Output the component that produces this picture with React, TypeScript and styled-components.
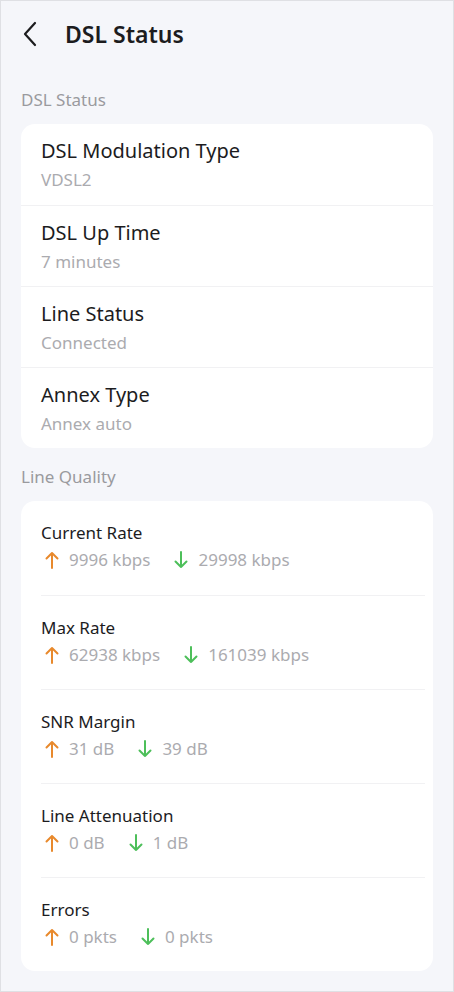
import styled, { createGlobalStyle } from "styled-components";

const GlobalStyle = createGlobalStyle`
  html, body {
    margin: 0;
    padding: 0;
    background: #f5f6fa;
  }
  * {
    box-sizing: border-box;
  }
`;

const statusRows = [
  { label: "DSL Modulation Type", value: "VDSL2" },
  { label: "DSL Up Time", value: "7 minutes" },
  { label: "Line Status", value: "Connected" },
  { label: "Annex Type", value: "Annex auto" },
];

const qualityRows = [
  { label: "Current Rate", up: "9996 kbps", down: "29998 kbps" },
  { label: "Max Rate", up: "62938 kbps", down: "161039 kbps" },
  { label: "SNR Margin", up: "31 dB", down: "39 dB" },
  { label: "Line Attenuation", up: "0 dB", down: "1 dB" },
  { label: "Errors", up: "0 pkts", down: "0 pkts" },
];

function Arrow({ dir }: { dir: "up" | "down" }) {
  const color = dir === "up" ? "#e8892c" : "#4dbf5a";
  return (
    <ArrowIcon width="14" height="18" viewBox="0 0 14 18" fill="none">
      {dir === "up" ? (
        <path d="M7 17V2M1.5 7.5L7 2l5.5 5.5" stroke={color} strokeWidth="2" strokeLinecap="round" strokeLinejoin="round" />
      ) : (
        <path d="M7 1v15M1.5 10.5L7 16l5.5-5.5" stroke={color} strokeWidth="2" strokeLinecap="round" strokeLinejoin="round" />
      )}
    </ArrowIcon>
  );
}

export default function App() {
  return (
    <Page>
      <GlobalStyle />
      <Header>
        <BackButton>
          <svg width="16" height="26" viewBox="0 0 16 26" fill="none">
            <path d="M13 2L3 13l10 11" stroke="#1c1c1e" strokeWidth="2.2" strokeLinecap="round" strokeLinejoin="round" />
          </svg>
        </BackButton>
        <Title>DSL Status</Title>
      </Header>

      <SectionLabel>DSL Status</SectionLabel>
      <Card>
        {statusRows.map((r) => (
          <StatusRow key={r.label}>
            <RowLabel>{r.label}</RowLabel>
            <RowValue>{r.value}</RowValue>
          </StatusRow>
        ))}
      </Card>

      <SectionLabel>Line Quality</SectionLabel>
      <Card>
        {qualityRows.map((r) => (
          <QualityRow key={r.label}>
            <QualityLabel>{r.label}</QualityLabel>
            <RateLine>
              <Rate>
                <Arrow dir="up" />
                {r.up}
              </Rate>
              <Rate>
                <Arrow dir="down" />
                {r.down}
              </Rate>
            </RateLine>
          </QualityRow>
        ))}
      </Card>
    </Page>
  );
}

const Page = styled.div`
  width: 454px;
  height: 992px;
  border: 1px solid #dfe0e4;
  background: #f5f6fa;
  padding: 0 20px;
  font-family: "Noto Sans", "Open Sans", sans-serif;
  overflow: hidden;
`;

const Header = styled.div`
  display: flex;
  align-items: center;
  height: 70px;
  padding-bottom: 4px;
  gap: 27px;
`;

const BackButton = styled.div`
  display: flex;
  align-items: center;
  padding-left: 1px;
`;

const Title = styled.div`
  font-size: 23px;
  font-weight: 600;
  color: #1c1c1e;
`;

const SectionLabel = styled.div`
  font-size: 17px;
  color: #9a9a9e;
  padding: 17px 0 12px;
  line-height: 24px;
`;

const Card = styled.div`
  background: #ffffff;
  border-radius: 14px;
  overflow: hidden;
`;

const StatusRow = styled.div`
  height: 81px;
  padding: 13px 20px 0;
  border-top: 1px solid #f1f1f3;
  &:first-child {
    border-top: none;
  }
`;

const RowLabel = styled.div`
  font-size: 20px;
  color: #1c1c1e;
  line-height: 28px;
`;

const RowValue = styled.div`
  font-size: 17px;
  color: #ababaf;
  line-height: 24px;
  margin-top: 3px;
`;

const QualityRow = styled.div`
  height: 94px;
  margin: 0 8px 0 20px;
  padding-top: 20px;
  border-top: 1px solid #f1f1f3;
  &:first-child {
    border-top: none;
  }
`;

const QualityLabel = styled.div`
  font-size: 17px;
  color: #1c1c1e;
  line-height: 24px;
`;

const RateLine = styled.div`
  display: flex;
  gap: 20px;
  margin-top: 3px;
`;

const Rate = styled.div`
  display: flex;
  align-items: center;
  gap: 10px;
  font-size: 17px;
  color: #ababaf;
  line-height: 24px;
  padding-left: 4px;
`;

const ArrowIcon = styled.svg`
  flex-shrink: 0;
`;
